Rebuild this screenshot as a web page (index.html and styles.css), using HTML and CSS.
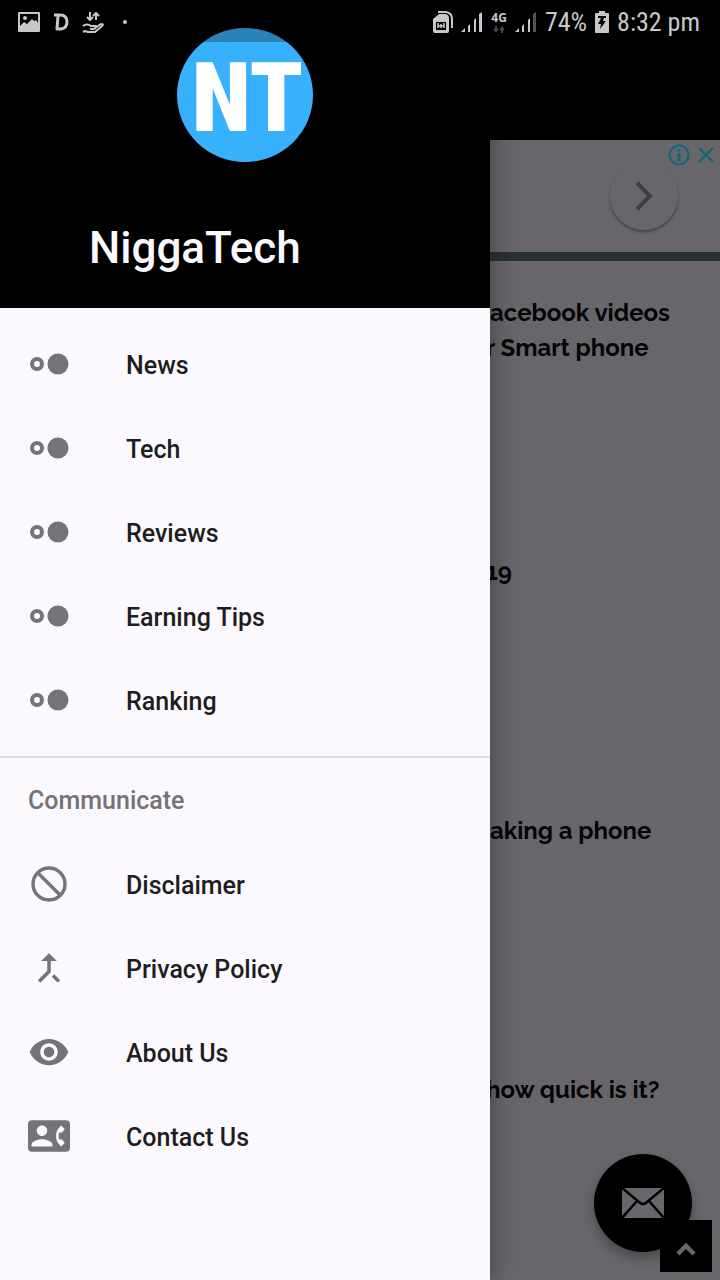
FILE: index.html
```html
<!DOCTYPE html>
<html lang="en">
<head>
<meta charset="utf-8">
<meta name="viewport" content="width=device-width, initial-scale=1">
<title>NiggaTech</title>
<link rel="stylesheet" href="styles.css">
</head>
<body>
<div class="screen">
  <div class="status">
    <div class="status-left">
      <svg width="22" height="20" viewBox="0 0 22 20" aria-hidden="true"><path fill="currentColor" fill-rule="evenodd" d="M1 0h20q1 0 1 1v18q0 1-1 1H1q-1 0-1-1V1q0-1 1-1zM2 2v12l4-4 3 2 5-5 2 2 2-1 2 3V2z"/><circle cx="7" cy="6" r="2" fill="currentColor"/></svg>
      <svg width="16" height="18" viewBox="0 0 16 18" fill="none" stroke="currentColor" stroke-width="3" stroke-linejoin="round" aria-hidden="true"><path d="M1 2h6q7 0 7 7 0 6-6 7H4L5 3"/></svg>
      <svg width="22" height="22" viewBox="0 0 22 22" fill="none" stroke="currentColor" stroke-width="2" stroke-linejoin="round" aria-hidden="true"><path d="M8 1v8M5 6l3 3 3-3M14 9V2M11 5l3-3 3 3M1 15q4-3 8 0h5q0 3-3 3H8M13 17l6-4q3 0 1 2l-7 6H6l-3-1-2 1"/></svg>
      <span class="dot"></span>
    </div>
    <div class="status-right">
      <svg width="20" height="22" viewBox="0 0 20 22" aria-hidden="true"><path d="M5 1h8q6 1 6 7v9" fill="none" stroke="currentColor" stroke-width="2"/><path fill="currentColor" fill-rule="evenodd" d="M6 3h7q3 1 3 4v13q0 2-2 2H2q-2 0-2-2V8zM3 11v8h10v-8z"/><path d="M5 12v5M11 12v5M5 15h6M8 13v4" stroke="currentColor" stroke-width="1.500"/></svg>
      <svg width="22" height="20" viewBox="0 0 22 20" fill="currentColor" aria-hidden="true"><path d="M0 20l4-4v4zM7 14l2-2v8H7zM13 8l2-2v14h-2zM18 2l3-2v20h-3z"/></svg>
      <span class="network"><span>4G</span>
        <svg width="12" height="7" viewBox="0 0 12 7" aria-hidden="true"><path d="M3 0v6M1 3l2 2 2-2M9 7V1M7 4l2-2 2 2" fill="none" stroke="#454447" stroke-width="2"/></svg></span>
      <svg width="22" height="20" viewBox="0 0 22 20" fill="currentColor" aria-hidden="true"><path d="M0 20l4-4v4zM7 14l2-2v8H7zM13 8l2-2v14h-2z"/><path fill="#555457" d="M18 2l3-2v20h-3z"/></svg>
      <span>74%</span>
      <svg width="14" height="22" viewBox="0 0 14 22" aria-hidden="true"><path fill="currentColor" d="M4 0h6v2h3q1 0 1 1v18q0 1-1 1H1q-1 0-1-1V3q0-1 1-1h3z"/><path fill="#000" d="M3 5h8v2H9l-1 3h3l-6 8 1-5H3l3-6H3z"/></svg>
      <span>8:32 pm</span>
    </div>
  </div>

  <aside class="drawer">
    <header class="brand">
      <div class="logo"><span>NT</span></div>
      <h1>NiggaTech</h1>
    </header>
    <nav class="menu">
      <a href="#news"><svg class="icon" viewBox="0 0 42 42"><circle cx="9" cy="21" r="5" fill="none" stroke="currentColor" stroke-width="4"/><circle cx="30" cy="21" r="10.500" fill="currentColor"/></svg><span>News</span></a>
      <a href="#tech"><svg class="icon" viewBox="0 0 42 42"><circle cx="9" cy="21" r="5" fill="none" stroke="currentColor" stroke-width="4"/><circle cx="30" cy="21" r="10.500" fill="currentColor"/></svg><span>Tech</span></a>
      <a href="#reviews"><svg class="icon" viewBox="0 0 42 42"><circle cx="9" cy="21" r="5" fill="none" stroke="currentColor" stroke-width="4"/><circle cx="30" cy="21" r="10.500" fill="currentColor"/></svg><span>Reviews</span></a>
      <a href="#earning"><svg class="icon" viewBox="0 0 42 42"><circle cx="9" cy="21" r="5" fill="none" stroke="currentColor" stroke-width="4"/><circle cx="30" cy="21" r="10.500" fill="currentColor"/></svg><span>Earning Tips</span></a>
      <a href="#ranking"><svg class="icon" viewBox="0 0 42 42"><circle cx="9" cy="21" r="5" fill="none" stroke="currentColor" stroke-width="4"/><circle cx="30" cy="21" r="10.500" fill="currentColor"/></svg><span>Ranking</span></a>
    </nav>
    <nav class="menu-more" aria-labelledby="more-title">
      <h2 id="more-title">Communicate</h2>
      <a href="#disclaimer"><svg class="icon" viewBox="0 0 42 42" fill="none" stroke="currentColor" stroke-width="3.400"><circle cx="21" cy="21" r="16"/><path d="M10 10l22 22"/></svg><span>Disclaimer</span></a>
      <a href="#privacy"><svg class="icon" viewBox="0 0 24 24"><path fill="currentColor" d="M17 20.410L18.410 19 15 15.590 13.590 17 17 20.410zM7.500 8H11v5.590L5.590 19 7 20.410l6-6V8h3.500L12 3.500 7.500 8z"/></svg><span>Privacy Policy</span></a>
      <a href="#about"><svg class="icon" viewBox="0 0 24 24"><path fill="currentColor" d="M12 4.500C7 4.500 2.730 7.610 1 12c1.730 4.390 6 7.500 11 7.500s9.270-3.110 11-7.500c-1.730-4.390-6-7.500-11-7.500zM12 17c-2.760 0-5-2.240-5-5s2.240-5 5-5 5 2.240 5 5-2.240 5-5 5zm0-8c-1.660 0-3 1.340-3 3s1.340 3 3 3 3-1.340 3-3-1.340-3-3-3z"/></svg><span>About Us</span></a>
      <a href="#contact"><svg class="icon" viewBox="0 0 24 24"><path fill="currentColor" d="M22 3H2C.9 3 0 3.900 0 5v14c0 1.100.9 2 2 2h20c1.100 0 1.990-.9 1.990-2L24 5c0-1.100-.9-2-2-2zM8 6c1.660 0 3 1.340 3 3s-1.340 3-3 3-3-1.340-3-3 1.340-3 3-3zm6 12H2v-1c0-2 4-3.100 6-3.100s6 1.100 6 3.100v1zm3.850-4h1.640L21 16l-1.990 1.990c-1.310-.98-2.280-2.380-2.730-3.990-.18-.64-.28-1.310-.28-2s.1-1.360.28-2c.45-1.620 1.420-3.010 2.730-3.990L21 8l-1.510 2h-1.640c-.22.63-.35 1.300-.35 2s.13 1.370.35 2z"/></svg><span>Contact Us</span></a>
    </nav>
  </aside>

  <main class="page">
    <div class="page-top"></div>
    <section class="ad" aria-label="Advertisement">
      <button class="next" aria-label="Next"><svg width="18" height="30" viewBox="0 0 18 30"><path d="M2 2l13 13L2 28" fill="none" stroke="currentColor" stroke-width="4"/></svg></button>
      <div class="ad-tools">
        <button aria-label="Ad information"><svg width="22" height="22" viewBox="0 0 22 22" fill="none" stroke="currentColor"><circle cx="11" cy="11" r="9.500" stroke-width="2"/><path d="M11 9v8M11 5v2.500" stroke-width="3"/></svg></button>
        <button aria-label="Close ad"><svg width="18" height="18" viewBox="0 0 18 18"><path d="M2 2l14 14M16 2L2 16" stroke="currentColor" stroke-width="2.400"/></svg></button>
      </div>
    </section>
    <div class="posts">
      <h3>acebook videos<br><span class="cut">r Smart phone</span></h3>
      <h3><span class="cut">19</span></h3>
      <h3>aking a phone</h3>
      <h3><span class="cut">how quick is it?</span></h3>
    </div>
    <button class="mail" aria-label="Send mail"><svg width="42" height="30" viewBox="0 0 42 30"><path fill="#68666a" d="M0 0h42v30H0z"/><path d="M0 0l17 14q4 4 8 0L42 0M0 30l15-17M42 30L27 13" fill="none" stroke="#000" stroke-width="2.500"/></svg></button>
    <button class="to-top" aria-label="Back to top"><svg width="20" height="14" viewBox="0 0 20 14"><path d="M2 12l8-8 8 8" fill="none" stroke="#68666a" stroke-width="4.500"/></svg></button>
  </main>
</div>
</body>
</html>
```
FILE: styles.css
```css
* {
  box-sizing: border-box;
}

body {
  margin: 0;
  font-family: Roboto, "Liberation Sans", sans-serif;
  background: #68666a;
}

h1, h2, h3 {
  margin: 0;
}

svg {
  display: block;
  flex: none;
}

button {
  padding: 0;
  border: 0;
  background: none;
  color: inherit;
  display: grid;
  place-items: center;
}

.screen {
  position: relative;
  display: grid;
  grid-template-columns: 490px 1fr;
  min-height: 100vh;
}

.status {
  position: absolute;
  z-index: 3;
  top: 0;
  left: 0;
  right: 0;
  height: 44px;
  padding: 0 20px 0 18px;
  display: flex;
  justify-content: space-between;
  color: #c9c7ca;
  font-family: "Roboto Condensed", Roboto, sans-serif;
  font-size: 26px;
}

.status-left,
.status-right {
  display: flex;
  align-items: center;
}

.status-left {
  gap: 13px;
}

.status-right {
  gap: 8px;
}

.dot {
  width: 4px;
  height: 4px;
  margin-left: 6px;
  border-radius: 50%;
  background: currentColor;
}

.network {
  display: grid;
  justify-items: center;
  gap: 2px;
  font: bold 12px/12px "Noto Sans", sans-serif;
}

.drawer {
  position: relative;
  z-index: 2;
  background: #fbf9fd;
  box-shadow: 0 0 24px rgba(0, 0, 0, 0.4);
}

.brand {
  padding: 28px 0 34px;
  background: #000;
  color: #fbf9fd;
}

.logo {
  width: 136px;
  height: 134px;
  padding: 7px 0 0 5px;
  margin-left: 177px;
  display: grid;
  place-items: center;
  border-radius: 50%;
  background: linear-gradient(#2a83b8 14px, #38b1fd 14px);
  color: #fff;
  font: 900 97px/127px "Roboto Condensed", Roboto, sans-serif;
}

.brand h1 {
  margin: 60px 0 0 89px;
  font-size: 44px;
  line-height: 52px;
  font-weight: 500;
}

.menu,
.menu-more {
  display: flex;
  flex-direction: column;
}

.menu {
  padding: 14px 0;
  border-bottom: 2px solid #dddbdf;
}

.menu a,
.menu-more a {
  height: 84px;
  padding-left: 28px;
  display: flex;
  align-items: center;
  gap: 56px;
  color: #1e1d20;
  font-size: 25px;
  font-weight: 500;
  text-decoration: none;
}

.menu span,
.menu-more span {
  padding-top: 2px;
}

.menu-more h2 {
  padding: 2px 0 0 28px;
  color: #757377;
  font-size: 25px;
  line-height: 82px;
  font-weight: 500;
}

.icon {
  width: 42px;
  height: 42px;
  color: #757377;
}

.page {
  position: relative;
  min-width: 0;
  background: #68666a;
}

.page-top {
  height: 140px;
  background: #000;
}

.ad {
  position: relative;
  height: 121px;
  padding: 22px 42px 0 0;
  border-bottom: 9px solid #2b3132;
  display: flex;
  justify-content: flex-end;
}

.next {
  width: 68px;
  height: 68px;
  border-radius: 50%;
  color: #403e41;
  background: #68666a;
  box-shadow: 0 2px 3px rgba(0, 0, 0, 0.35);
}

.ad-tools {
  position: absolute;
  top: 4px;
  right: 5px;
  display: flex;
  align-items: center;
  gap: 7px;
  color: #0b6a7a;
}

.posts {
  padding-top: 34px;
  display: flex;
  flex-direction: column;
  color: #050406;
}

.posts h3 {
  min-height: 259px;
  font: 700 24px/35px Raleway, Inter, sans-serif;
  white-space: nowrap;
}

.posts h3:last-child {
  min-height: 0;
}

.cut {
  margin-left: -4px;
}

.mail {
  position: absolute;
  right: 28px;
  bottom: 28px;
  width: 98px;
  height: 98px;
  border-radius: 50%;
  background: #000;
  box-shadow: 0 6px 12px rgba(0, 0, 0, 0.3);
}

.to-top {
  position: absolute;
  right: 8px;
  bottom: 8px;
  width: 52px;
  height: 52px;
  padding-top: 6px;
  background: #000;
}
```
